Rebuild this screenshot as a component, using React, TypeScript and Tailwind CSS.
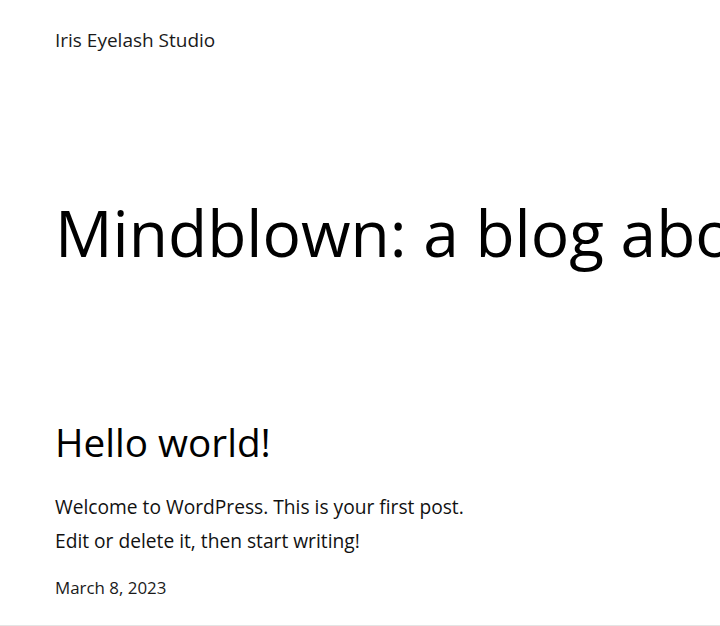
import React from "react";

export default function App() {
  return (
    <div className="min-h-[626px] w-full bg-white font-['Open_Sans',sans-serif] text-black flex flex-col">
      <div className="flex flex-col pl-[55px] pr-[55px] pb-[25px] border-b border-[#e4e4e4] overflow-hidden">
        <header className="pt-[26px]">
          <p className="text-[19px] leading-[28px] text-[#1a1a1a] whitespace-nowrap">Iris Eyelash Studio</p>
        </header>
        <h1 className="mt-[140px] text-[64px] leading-[77px] font-normal whitespace-nowrap">
          Mindblown: a blog about philosophy.
        </h1>
        <article className="mt-[148px] flex flex-col">
          <h2 className="text-[38.7px] leading-[46px] font-normal whitespace-nowrap">Hello world!</h2>
          <div className="mt-[25px] text-[19.2px] leading-[33.5px] text-[#111]">
            <p>Welcome to WordPress. This is your first post.</p>
            <p>Edit or delete it, then start writing!</p>
          </div>
          <p className="mt-[19px] text-[16.9px] leading-[24px] text-[#1a1a1a]">March 8, 2023</p>
        </article>
      </div>
    </div>
  );
}
